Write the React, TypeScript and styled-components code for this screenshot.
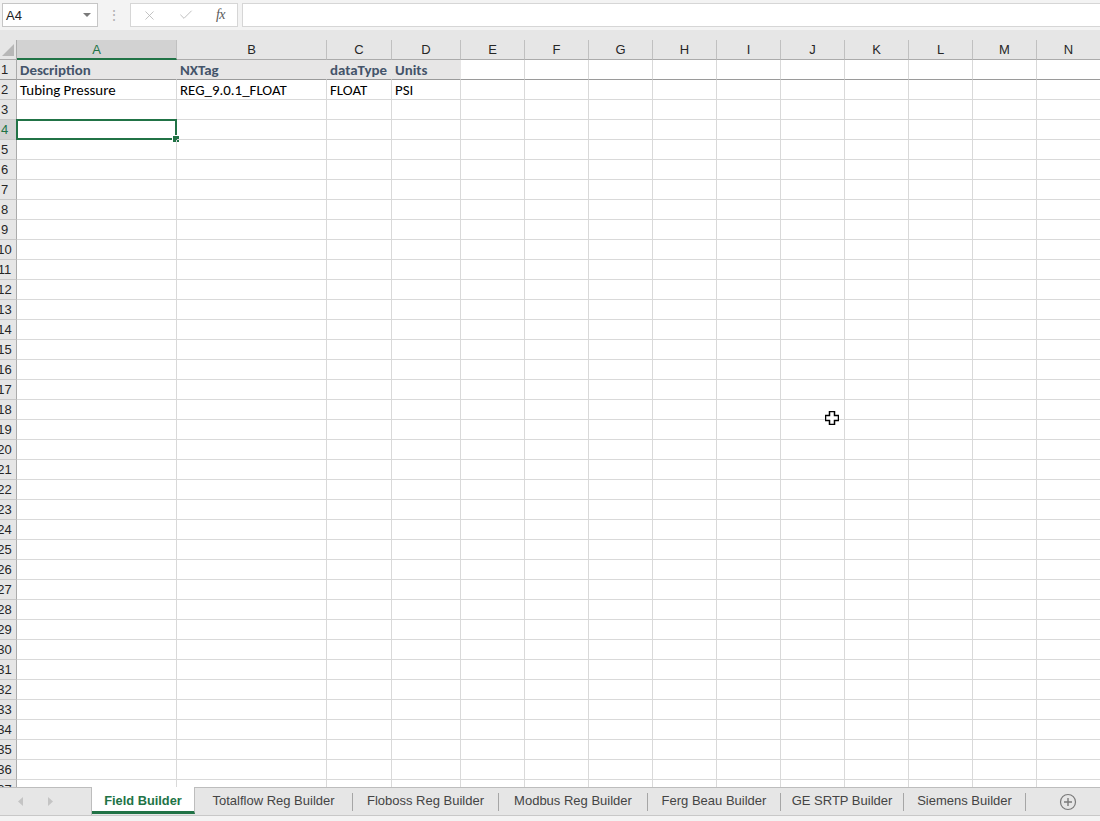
import React from 'react';
import styled, { createGlobalStyle } from 'styled-components';
import { X, Check } from 'lucide-react';

const GlobalStyle = createGlobalStyle`
    html, body {
        margin: 0;
        padding: 0;
        overflow: hidden;
        background: #ffffff;
    }
    * {
        box-sizing: border-box;
    }
`;

const green = '#217346';
const gridLine = '#d9d9d9';
const headBg = '#e6e6e6';
const headSel = '#d2d2d2';
const uiFont = `"Segoe UI", "Liberation Sans", Arial, sans-serif`;
const cellFont = `Calibri, Carlito, "Liberation Sans", Arial, sans-serif`;

const COLS = [160, 150, 65, 69, 64, 64, 64, 64, 64, 64, 64, 64, 64, 64];
const LETTERS = 'ABCDEFGHIJKLMN'.split('');
const TEMPLATE = `17px ${COLS.map((w) => `${w}px`).join(' ')}`;

const DATA: Record<number, string[]> = {
    1: ['Description', 'NXTag', 'dataType', 'Units'],
    2: ['Tubing Pressure', 'REG_9.0.1_FLOAT', 'FLOAT', 'PSI'],
};

// sheet tabs with the width each takes in the tab strip
const TABS = [
    { name: 'Field Builder', width: 103 },
    { name: 'Totalflow Reg Builder', width: 157 },
    { name: 'Floboss Reg Builder', width: 145 },
    { name: 'Modbus Reg Builder', width: 148 },
    { name: 'Ferg Beau Builder', width: 132 },
    { name: 'GE SRTP Builder', width: 122 },
    { name: 'Siemens Builder', width: 121 },
];

const Window = styled.div`
    position: relative;
    width: 1100px;
    height: 821px;
    display: flex;
    flex-direction: column;
    background: #ffffff;
    font-family: ${uiFont};
    overflow: hidden;
`;

const FormulaBar = styled.div`
    height: 30px;
    flex: none;
    display: flex;
    align-items: center;
    padding: 0 0 0 2px;
    background: #f3f3f3;
`;

const NameBox = styled.div`
    width: 96px;
    height: 24px;
    border: 1px solid #c6c6c6;
    background: #ffffff;
    display: flex;
    align-items: center;
    justify-content: space-between;
    padding: 0 6px 0 3px;
    font-size: 13px;
    color: #222;
`;

const Caret = styled.span`
    width: 0;
    height: 0;
    border-left: 4px solid transparent;
    border-right: 4px solid transparent;
    border-top: 4px solid #7a7a7a;
`;

const Dots = styled.div`
    width: 32px;
    text-align: center;
    color: #b0b0b0;
    font-size: 14px;
`;

const FxBox = styled.div`
    width: 108px;
    height: 24px;
    border: 1px solid #d6d6d6;
    background: #ffffff;
    display: flex;
    align-items: center;
    justify-content: space-between;
    padding: 0 12px 0 11px;
`;

const FxLabel = styled.span`
    font-family: "Liberation Serif", "Times New Roman", serif;
    font-style: italic;
    font-size: 14px;
    color: #5a5a5a;
    letter-spacing: -0.5px;
`;

const FormulaInput = styled.div`
    flex: 1;
    height: 24px;
    margin-left: 4px;
    border: 1px solid #d6d6d6;
    border-right: none;
    background: #ffffff;
`;

const Sheet = styled.div`
    flex: 1;
    overflow: hidden;
    background: #ffffff;
`;

const Row = styled.div<{ $head?: boolean }>`
    display: grid;
    grid-template-columns: ${TEMPLATE};
    height: ${(p) => (p.$head ? '30px' : '20px')};
    background: ${(p) => (p.$head ? headBg : 'transparent')};
    padding-top: ${(p) => (p.$head ? '10px' : '0')};
`;

const Corner = styled.div`
    border-right: 1px solid #ababab;
    border-bottom: 1px solid #ababab;
    display: flex;
    align-items: flex-end;
    justify-content: flex-end;
    padding: 0 2px 3px 0;
`;

const ColHead = styled.div<{ $sel?: boolean }>`
    display: flex;
    align-items: center;
    justify-content: center;
    font-size: 13px;
    color: ${(p) => (p.$sel ? green : '#262626')};
    background: ${(p) => (p.$sel ? headSel : headBg)};
    border-right: 1px solid #c0c0c0;
    border-bottom: ${(p) => (p.$sel ? `2px solid ${green}` : '1px solid #ababab')};
`;

const RowHead = styled.div<{ $sel?: boolean; $frozen?: boolean }>`
    display: flex;
    align-items: center;
    justify-content: center;
    padding-right: 7px;
    overflow: hidden;
    white-space: nowrap;
    font-size: 13px;
    color: ${(p) => (p.$sel ? green : '#262626')};
    background: ${(p) => (p.$sel ? headSel : headBg)};
    border-right: 1px solid ${(p) => (p.$sel ? green : '#ababab')};
    border-bottom: 1px solid ${(p) => (p.$frozen ? '#9a9a9a' : '#c8c8c8')};
`;

const Cell = styled.div<{ $header?: boolean; $frozen?: boolean }>`
    position: relative;
    padding: 1px 0 0 3px;
    line-height: 18px;
    white-space: nowrap;
    overflow: visible;
    font-family: ${cellFont};
    font-size: 14.9px;
    font-weight: ${(p) => (p.$header ? 700 : 400)};
    color: ${(p) => (p.$header ? '#44546a' : '#000000')};
    background: ${(p) => (p.$header ? '#e7e6e6' : 'transparent')};
    border-right: 1px solid ${(p) => (p.$header ? '#e7e6e6' : gridLine)};
    border-bottom: 1px solid ${(p) => (p.$frozen ? '#9a9a9a' : gridLine)};
`;

const Selection = styled.div`
    position: absolute;
    left: -1px;
    top: -1px;
    right: -1px;
    bottom: -1px;
    border: 2px solid ${green};
    pointer-events: none;
`;

const FillHandle = styled.div`
    position: absolute;
    right: -4px;
    bottom: -4px;
    width: 6px;
    height: 6px;
    background: ${green};
    box-shadow: 0 0 0 1px #ffffff;
`;

const TabBar = styled.div`
    height: 28px;
    flex: none;
    display: flex;
    align-items: stretch;
    background: ${headBg};
    border-top: 1px solid #bdbdbd;
`;

const Nav = styled.div`
    width: 92px;
    display: flex;
    align-items: center;
    gap: 23px;
    padding-left: 18px;
    border-right: 1px solid #bdbdbd;
`;

const Tab = styled.div<{ $active?: boolean; $width: number }>`
    width: ${(p) => p.$width}px;
    flex: none;
    display: flex;
    align-items: center;
    justify-content: center;
    font-size: ${(p) => (p.$active ? '12.8px' : '13px')};
    white-space: nowrap;
    font-weight: ${(p) => (p.$active ? 700 : 400)};
    color: ${(p) => (p.$active ? green : '#444444')};
    background: ${(p) => (p.$active ? '#ffffff' : 'transparent')};
    border-right: ${(p) => (p.$active ? '1px solid #bdbdbd' : 'none')};
    border-bottom: 3px solid ${(p) => (p.$active ? green : 'transparent')};
    padding-top: 2px;
    margin-top: -1px;
    margin-bottom: 1px;
`;

const Divider = styled.div`
    width: 1px;
    flex: none;
    align-self: center;
    height: 18px;
    background: #a6a6a6;
`;

const AddSheet = styled.div`
    flex: 1;
    display: flex;
    align-items: center;
    justify-content: center;
    padding-left: 10px;
`;

const StatusStrip = styled.div`
    height: 6px;
    flex: none;
    background: #f3f3f3;
    border-top: 1px solid #c8c8c8;
`;

const Cursor = styled.svg`
    position: absolute;
    left: 825px;
    top: 411px;
`;

function App() {
    const rows = Array.from({ length: 37 }, (_, i) => i + 1);

    return (
        <Window>
            <GlobalStyle />
            <FormulaBar>
                <NameBox>
                    A4
                    <Caret />
                </NameBox>
                <Dots>⋮</Dots>
                <FxBox>
                    <X size={15} strokeWidth={1.3} color="#b5b5b5" />
                    <Check size={16} strokeWidth={1.3} color="#b5b5b5" />
                    <FxLabel>fx</FxLabel>
                </FxBox>
                <FormulaInput />
            </FormulaBar>

            <Sheet>
                <Row $head>
                    <Corner>
                        <svg width="12" height="12" viewBox="0 0 12 12">
                            <polygon points="12,0 12,12 0,12" fill="#b7b7b7" />
                        </svg>
                    </Corner>
                    {LETTERS.map((l) => (
                        <ColHead key={l} $sel={l === 'A'}>{l}</ColHead>
                    ))}
                </Row>
                {rows.map((r) => (
                    <Row key={r}>
                        <RowHead $sel={r === 4} $frozen={r === 1}>{r}</RowHead>
                        {LETTERS.map((l, ci) => {
                            const text = DATA[r]?.[ci] ?? '';
                            const isHeader = r === 1 && ci < 4;
                            return (
                                <Cell key={l} $header={isHeader} $frozen={r === 1}>
                                    {text}
                                    {r === 4 && ci === 0 && (
                                        <Selection>
                                            <FillHandle />
                                        </Selection>
                                    )}
                                </Cell>
                            );
                        })}
                    </Row>
                ))}
            </Sheet>

            <TabBar>
                <Nav>
                    <svg width="6" height="9" viewBox="0 0 6 9">
                        <polygon points="5,0 5,9 0,4.5" fill="#c4c4c4" />
                    </svg>
                    <svg width="6" height="9" viewBox="0 0 6 9">
                        <polygon points="1,0 1,9 6,4.5" fill="#c4c4c4" />
                    </svg>
                </Nav>
                {TABS.map((t, i) => (
                    <React.Fragment key={t.name}>
                        <Tab $active={i === 0} $width={t.width}>{t.name}</Tab>
                        {i > 0 && <Divider />}
                    </React.Fragment>
                ))}
                <AddSheet>
                    <svg width="18" height="18" viewBox="0 0 18 18">
                        <circle cx="9" cy="9" r="7.5" fill="none" stroke="#7a7a7a" strokeWidth="1.2" />
                        <path d="M9 5v8M5 9h8" stroke="#7a7a7a" strokeWidth="1.4" />
                    </svg>
                </AddSheet>
            </TabBar>
            <StatusStrip />

            <Cursor width="14" height="14" viewBox="0 0 14 14">
                <path
                    d="M4.5 0.5h5v4h4v5h-4v4h-5v-4h-4v-5h4z"
                    fill="#ffffff"
                    stroke="#000000"
                    strokeWidth="1.5"
                />
            </Cursor>
        </Window>
    );
}

export default App;
